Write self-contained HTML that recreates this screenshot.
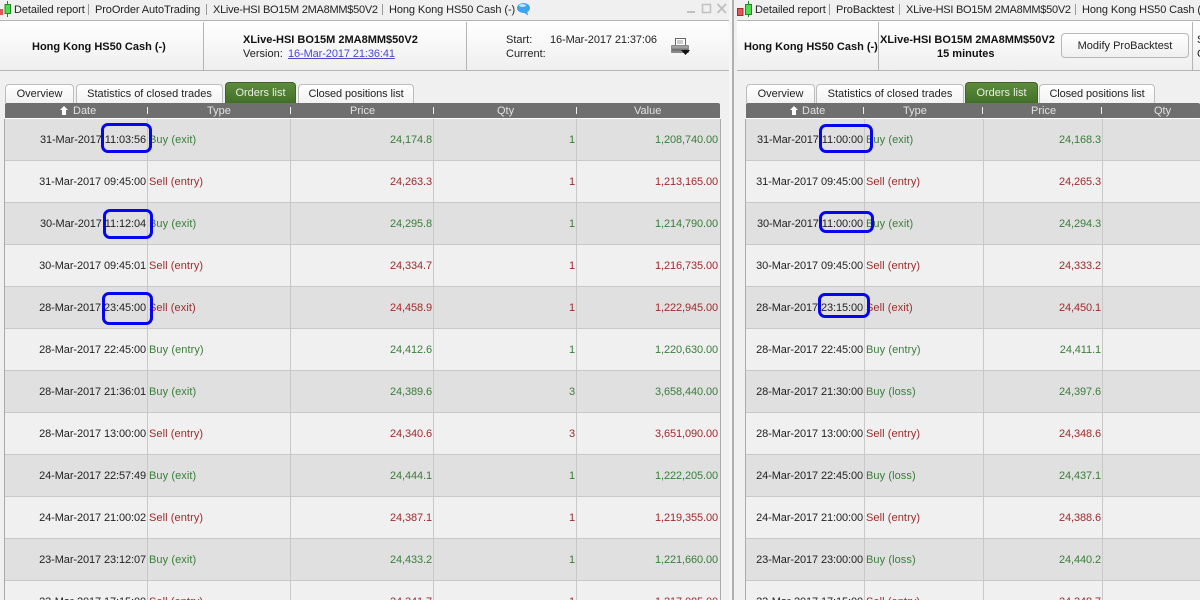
<!DOCTYPE html>
<html><head><meta charset="utf-8"><style>
html,body{margin:0;padding:0}
body{width:1200px;height:600px;overflow:hidden;position:relative;background:#f0f0f0;font:11px/14px "Liberation Sans",sans-serif;color:#222}
div,span,a{position:absolute;white-space:nowrap}
.p{top:0;height:600px;overflow:hidden}
.top{left:0;top:0;height:20px;width:100%;background:#f0f0f0;border-bottom:1px solid #b4b4b4}
.hd{left:0;top:21px;width:100%;height:49px;background:linear-gradient(#fff,#efefef);border-bottom:1px solid #b4b4b4}
.vs{top:22px;width:1px;height:48px;background:#b4b4b4}
.tt{top:3px;color:#222;letter-spacing:-.1px}
.sp{top:4px;width:1px;height:11px;background:#999}
.b{font-weight:bold;color:#111}
.tab{top:84px;height:18px;background:linear-gradient(#fff,#f2f2f2);border:1px solid #bdbdbd;border-bottom:none;border-radius:4px 4px 0 0;text-align:center;line-height:19px;box-sizing:content-box}
.cp{letter-spacing:-.1px}
.on{top:82px;height:21px;border:1px solid #3f6426;border-bottom:none;background:linear-gradient(#5d8a3d,#3f6f27);color:#e8efe2;line-height:21px}
.th{top:103px;height:15px;background:#6f6f6f;border-bottom:1px solid #fff;color:#e2e2e2;line-height:15px;border-radius:2px 2px 0 0}
.th span{top:1px}
.tk{top:4px;width:1px;height:7px;background:#eee}
.r{height:41px;border-bottom:1px solid #c8c8c8;line-height:41px;left:0}
.g0{background:#e0e0e0}.g1{background:#f0f0f0}
.r span{top:1px;text-align:right;letter-spacing:-.1px}
.r span.ty{letter-spacing:.08px}
.cl{width:1px;top:119px;height:481px;background:#c8c8c8}
.L .da{left:0;width:141px;color:#222}.L .ty{left:144px;text-align:left}
.L .pr{left:291px;width:136px}.L .qt{left:434px;width:136px}.L .va{left:577px;width:136px}
.R .da{left:0;width:117px;color:#222}.R .ty{left:120px;text-align:left}
.R .pr{left:244px;width:111px}
.u{color:#3a7d3a}.s{color:#9c2b2b}
.box{border:3px solid #0505f0;border-radius:7px;box-sizing:border-box}
a{color:#4a4acb;text-decoration:underline;letter-spacing:-.1px}
.btn{border:1px solid #b8b8b8;border-radius:4px;background:linear-gradient(#fff,#efefef);text-align:center}
</style></head><body>

<div class="p" style="left:0;width:729px">
<div class="top"></div>
<svg style="position:absolute;left:0;top:0" width="12" height="18"><rect x="0" y="9" width="3" height="6" fill="#e25555"/><path d="M7.500 1V17" stroke="#1f8a1f"/><rect x="5" y="4.500" width="5.500" height="9" fill="#4fdc4f" stroke="#1f8a1f"/></svg>
<span class="tt" style="left:14px">Detailed report</span><div class="sp" style="left:88px"></div>
<span class="tt" style="left:95px">ProOrder AutoTrading</span><div class="sp" style="left:206px"></div>
<span class="tt" style="left:213px;letter-spacing:-.26px">XLive-HSI BO15M 2MA8MM$50V2</span><div class="sp" style="left:382px"></div>
<span class="tt" style="left:389px">Hong Kong HS50 Cash (-)</span>
<svg style="position:absolute;left:516px;top:2px" width="15" height="14"><ellipse cx="7.500" cy="6" rx="6.500" ry="5" fill="#3aa5ee"/><path d="M7 10L12 13.500L11 8Z" fill="#3aa5ee"/><ellipse cx="6.500" cy="3.500" rx="3.500" ry="1.500" fill="#bfe4fb"/></svg>
<svg style="position:absolute;left:686px;top:2px" width="43" height="14"><path d="M1 10H9" stroke="#c0c0c0" stroke-width="2"/><rect x="16.500" y="2.500" width="8" height="8" fill="none" stroke="#c0c0c0" stroke-width="1.500"/><path d="M31.500 2L40 11M40 2L31.500 11" stroke="#c0c0c0" stroke-width="2"/></svg>
<div class="hd"></div><div class="vs" style="left:203px"></div><div class="vs" style="left:466px"></div>
<span class="b" style="left:32px;top:40px">Hong Kong HS50 Cash (-)</span>
<span class="b" style="left:243px;top:33px">XLive-HSI BO15M 2MA8MM$50V2</span>
<span style="left:243px;top:47px">Version:<a style="left:45px;top:0">16-Mar-2017 21:36:41</a></span>
<span style="left:506px;top:33px">Start:</span><span style="left:550px;top:33px;letter-spacing:-.1px">16-Mar-2017 21:37:06</span>
<span style="left:506px;top:47px">Current:</span>
<svg style="position:absolute;left:671px;top:38px" width="19" height="17"><rect x="4.500" y="0.500" width="10" height="7" fill="#fff" stroke="#666"/><path d="M6 3H12M6 5H12" stroke="#999"/><rect x="0" y="7" width="18" height="8" rx="1" fill="#8a8a8a"/><path d="M1 9H17" stroke="#b5b5b5"/><path d="M1 12H17" stroke="#5c5c5c"/><path d="M10 12H19L14.500 17Z" fill="#111"/></svg>
<div class="tab" style="left:5px;width:67px">Overview</div>
<div class="tab" style="left:76px;width:145px">Statistics of closed trades</div>
<div class="tab on" style="left:225px;width:69px">Orders list</div>
<div class="tab cp" style="left:298px;width:114px">Closed positions list</div>
<div class="th" style="left:5px;width:715px">
<svg style="position:absolute;left:54px;top:2px" width="10" height="11"><path d="M5 1L9 5H7V10H3V5H1Z" fill="#fff"/></svg>
<span style="left:68px">Date</span><div class="tk" style="left:142px"></div>
<span style="left:202px">Type</span><div class="tk" style="left:285px"></div>
<span style="left:345px">Price</span><div class="tk" style="left:428px"></div>
<span style="left:492px">Qty</span><div class="tk" style="left:571px"></div>
<span style="left:629px">Value</span></div>
<div class="L" style="left:5px;top:119px;width:715px;height:481px">
<div class="r g0" style="top:0;width:715px"><span class="da">31-Mar-2017 11:03:56</span><span class="ty u">Buy (exit)</span><span class="pr u">24,174.8</span><span class="qt u">1</span><span class="va u">1,208,740.00</span></div>
<div class="r g1" style="top:42px;width:715px"><span class="da">31-Mar-2017 09:45:00</span><span class="ty s">Sell (entry)</span><span class="pr s">24,263.3</span><span class="qt s">1</span><span class="va s">1,213,165.00</span></div>
<div class="r g0" style="top:84px;width:715px"><span class="da">30-Mar-2017 11:12:04</span><span class="ty u">Buy (exit)</span><span class="pr u">24,295.8</span><span class="qt u">1</span><span class="va u">1,214,790.00</span></div>
<div class="r g1" style="top:126px;width:715px"><span class="da">30-Mar-2017 09:45:01</span><span class="ty s">Sell (entry)</span><span class="pr s">24,334.7</span><span class="qt s">1</span><span class="va s">1,216,735.00</span></div>
<div class="r g0" style="top:168px;width:715px"><span class="da">28-Mar-2017 23:45:00</span><span class="ty s">Sell (exit)</span><span class="pr s">24,458.9</span><span class="qt s">1</span><span class="va s">1,222,945.00</span></div>
<div class="r g1" style="top:210px;width:715px"><span class="da">28-Mar-2017 22:45:00</span><span class="ty u">Buy (entry)</span><span class="pr u">24,412.6</span><span class="qt u">1</span><span class="va u">1,220,630.00</span></div>
<div class="r g0" style="top:252px;width:715px"><span class="da">28-Mar-2017 21:36:01</span><span class="ty u">Buy (exit)</span><span class="pr u">24,389.6</span><span class="qt u">3</span><span class="va u">3,658,440.00</span></div>
<div class="r g1" style="top:294px;width:715px"><span class="da">28-Mar-2017 13:00:00</span><span class="ty s">Sell (entry)</span><span class="pr s">24,340.6</span><span class="qt s">3</span><span class="va s">3,651,090.00</span></div>
<div class="r g0" style="top:336px;width:715px"><span class="da">24-Mar-2017 22:57:49</span><span class="ty u">Buy (exit)</span><span class="pr u">24,444.1</span><span class="qt u">1</span><span class="va u">1,222,205.00</span></div>
<div class="r g1" style="top:378px;width:715px"><span class="da">24-Mar-2017 21:00:02</span><span class="ty s">Sell (entry)</span><span class="pr s">24,387.1</span><span class="qt s">1</span><span class="va s">1,219,355.00</span></div>
<div class="r g0" style="top:420px;width:715px"><span class="da">23-Mar-2017 23:12:07</span><span class="ty u">Buy (exit)</span><span class="pr u">24,433.2</span><span class="qt u">1</span><span class="va u">1,221,660.00</span></div>
<div class="r g1" style="top:462px;width:715px"><span class="da">23-Mar-2017 17:15:00</span><span class="ty s">Sell (entry)</span><span class="pr s">24,341.7</span><span class="qt s">1</span><span class="va s">1,217,085.00</span></div>
</div>
<div class="cl" style="left:4px;background:#aaa"></div><div class="cl" style="left:147px"></div><div class="cl" style="left:290px"></div><div class="cl" style="left:433px"></div><div class="cl" style="left:576px"></div><div class="cl" style="left:720px;background:#aaa"></div>
<div class="box" style="left:101px;top:123px;width:51px;height:30px"></div>
<div class="box" style="left:103px;top:209px;width:50px;height:30px"></div>
<div class="box" style="left:102px;top:292px;width:51px;height:33px"></div>
</div>

<div style="left:729px;top:0;width:3px;height:600px;background:#f6f6f6"></div>
<div style="left:732px;top:0;width:2px;height:600px;background:#b0b0b0"></div>

<div class="p" style="left:737px;width:463px">
<div class="top"></div>
<svg style="position:absolute;left:0;top:0" width="15" height="18"><rect x="0.500" y="8.500" width="5.500" height="7" fill="#e25555" stroke="#a03030"/><path d="M11.500 1V17" stroke="#1f8a1f"/><rect x="8.500" y="4.500" width="6" height="10" fill="#4fdc4f" stroke="#1f8a1f"/></svg>
<span class="tt" style="left:18px">Detailed report</span><div class="sp" style="left:92px"></div>
<span class="tt" style="left:99px">ProBacktest</span><div class="sp" style="left:162px"></div>
<span class="tt" style="left:169px;letter-spacing:-.26px">XLive-HSI BO15M 2MA8MM$50V2</span><div class="sp" style="left:338px"></div>
<span class="tt" style="left:345px">Hong Kong HS50 Cash (-)</span>
<div class="hd"></div><div class="vs" style="left:141px"></div><div class="vs" style="left:455px"></div>
<span class="b" style="left:7px;top:40px">Hong Kong HS50 Cash (-)</span>
<span class="b" style="left:143px;top:33px">XLive-HSI BO15M 2MA8MM$50V2</span>
<span class="b" style="left:200px;top:47px">15 minutes</span>
<div class="btn" style="left:324px;top:33px;width:126px;height:23px;line-height:25px">Modify ProBacktest</div>
<span style="left:460px;top:33px">Start:</span><span style="left:460px;top:47px">Current:</span>
<div class="tab" style="left:9px;width:67px">Overview</div>
<div class="tab" style="left:79px;width:146px">Statistics of closed trades</div>
<div class="tab on" style="left:228px;width:71px">Orders list</div>
<div class="tab cp" style="left:302px;width:114px">Closed positions list</div>
<div class="th" style="left:9px;width:454px">
<svg style="position:absolute;left:43px;top:2px" width="10" height="11"><path d="M5 1L9 5H7V10H3V5H1Z" fill="#fff"/></svg>
<span style="left:56px">Date</span><div class="tk" style="left:117px"></div>
<span style="left:157px">Type</span><div class="tk" style="left:236px"></div>
<span style="left:285px">Price</span><div class="tk" style="left:355px"></div>
<span style="left:408px">Qty</span></div>
<div class="R" style="left:9px;top:119px;width:454px;height:481px">
<div class="r g0" style="top:0;width:454px"><span class="da">31-Mar-2017 11:00:00</span><span class="ty u">Buy (exit)</span><span class="pr u">24,168.3</span></div>
<div class="r g1" style="top:42px;width:454px"><span class="da">31-Mar-2017 09:45:00</span><span class="ty s">Sell (entry)</span><span class="pr s">24,265.3</span></div>
<div class="r g0" style="top:84px;width:454px"><span class="da">30-Mar-2017 11:00:00</span><span class="ty u">Buy (exit)</span><span class="pr u">24,294.3</span></div>
<div class="r g1" style="top:126px;width:454px"><span class="da">30-Mar-2017 09:45:00</span><span class="ty s">Sell (entry)</span><span class="pr s">24,333.2</span></div>
<div class="r g0" style="top:168px;width:454px"><span class="da">28-Mar-2017 23:15:00</span><span class="ty s">Sell (exit)</span><span class="pr s">24,450.1</span></div>
<div class="r g1" style="top:210px;width:454px"><span class="da">28-Mar-2017 22:45:00</span><span class="ty u">Buy (entry)</span><span class="pr u">24,411.1</span></div>
<div class="r g0" style="top:252px;width:454px"><span class="da">28-Mar-2017 21:30:00</span><span class="ty u">Buy (loss)</span><span class="pr u">24,397.6</span></div>
<div class="r g1" style="top:294px;width:454px"><span class="da">28-Mar-2017 13:00:00</span><span class="ty s">Sell (entry)</span><span class="pr s">24,348.6</span></div>
<div class="r g0" style="top:336px;width:454px"><span class="da">24-Mar-2017 22:45:00</span><span class="ty u">Buy (loss)</span><span class="pr u">24,437.1</span></div>
<div class="r g1" style="top:378px;width:454px"><span class="da">24-Mar-2017 21:00:00</span><span class="ty s">Sell (entry)</span><span class="pr s">24,388.6</span></div>
<div class="r g0" style="top:420px;width:454px"><span class="da">23-Mar-2017 23:00:00</span><span class="ty u">Buy (loss)</span><span class="pr u">24,440.2</span></div>
<div class="r g1" style="top:462px;width:454px"><span class="da">23-Mar-2017 17:15:00</span><span class="ty s">Sell (entry)</span><span class="pr s">24,348.7</span></div>
</div>
<div class="cl" style="left:8px;background:#aaa"></div><div class="cl" style="left:127px"></div><div class="cl" style="left:246px"></div><div class="cl" style="left:365px"></div>
<div class="box" style="left:82px;top:124px;width:54px;height:29px"></div>
<div class="box" style="left:82px;top:211px;width:55px;height:22px"></div>
<div class="box" style="left:81px;top:293px;width:52px;height:25px"></div>
</div>
</body></html>
